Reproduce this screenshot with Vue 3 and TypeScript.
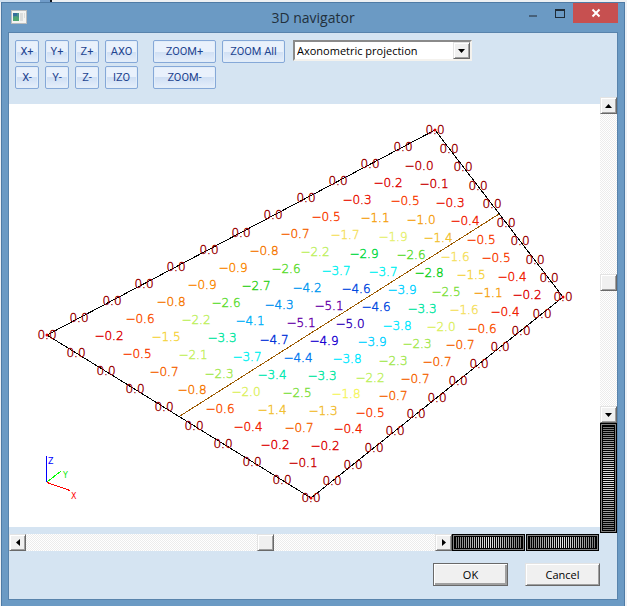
<script setup lang="ts">
import { ref } from 'vue'

interface Point { x: number; y: number }
interface Label extends Point { text: string; color: string }

const projection = ref('Axonometric projection')
const panX = ref(59)
const panY = ref(58)
const spinX = ref(50)
const spinY = ref(50)
const spinZ = ref(50)

// Plate corners on the 591 x 423 drawing
const west: Point = { x: 38, y: 231 }
const north: Point = { x: 426, y: 26 }
const east: Point = { x: 554, y: 193 }
const south: Point = { x: 302, y: 394 }

const values: string[] = [
  '0.2 0.6 0.8 0.9 0.9 0.8 0.7 0.5 0.3 0.2 0.0',
  '0.5 1.5 2.2 2.6 2.7 2.6 2.2 1.7 1.1 0.5 0.1',
  '0.7 2.1 3.3 4.1 4.3 4.2 3.7 2.9 1.9 1.0 0.3',
  '0.8 2.3 3.7 4.7 5.1 5.1 4.6 3.7 2.6 1.4 0.4',
  '0.6 2.0 3.4 4.4 4.9 5.0 4.6 3.9 2.8 1.6 0.5',
  '0.4 1.4 2.5 3.3 3.8 3.9 3.8 3.3 2.5 1.5 0.5',
  '0.2 0.7 1.3 1.8 2.2 2.3 2.3 2.0 1.6 1.1 0.4',
  '0.1 0.2 0.4 0.5 0.7 0.7 0.7 0.7 0.6 0.4 0.2',
]

const palette: Record<string, string> = {
  '0.0': '#b80000', '0.1': '#c80000', '0.2': '#dc0000', '0.3': '#e81000', '0.4': '#f02000',
  '0.5': '#f83c00', '0.6': '#fa5000', '0.7': '#f56400', '0.8': '#f57800', '0.9': '#fa8800',
  '1.0': '#f5a010', '1.1': '#f5a010', '1.3': '#f2bc30', '1.4': '#f2c030', '1.5': '#f5d440',
  '1.6': '#f5e060', '1.7': '#f5e060', '1.8': '#f5f560', '1.9': '#e6f070', '2.0': '#dcf060',
  '2.1': '#c4f060', '2.2': '#bef060', '2.3': '#a4e850', '2.5': '#80e040', '2.6': '#5cdc30',
  '2.7': '#30d020', '2.8': '#10d020', '2.9': '#00d840', '3.3': '#00e6a0', '3.4': '#00e8b0',
  '3.7': '#00f0f0', '3.8': '#00e8ff', '3.9': '#00d0ff', '4.1': '#00b0f8', '4.2': '#0098f0',
  '4.3': '#0090f0', '4.4': '#0078f0', '4.6': '#0048e0', '4.7': '#0030d8', '4.9': '#1800d0',
  '5.0': '#3000b8', '5.1': '#6800a8',
}

function mix(a: Point, b: Point, t: number): Point {
  return { x: a.x + (b.x - a.x) * t, y: a.y + (b.y - a.y) * t }
}

function place(p: Point, text: string, color: string): Label {
  return { x: Math.round(p.x), y: Math.round(p.y) + 4, text, color }
}

function edge(a: Point, b: Point, parts: number): Label[] {
  return Array.from({ length: parts }, (_, i) => place(mix(a, b, i / parts), '0.0', '#990000'))
}

const labels: Label[] = [
  ...edge(west, north, 12),
  ...edge(north, east, 9),
  ...edge(east, south, 12),
  ...edge(south, west, 9),
  ...values.flatMap((line, row) => {
    const first = mix({ x: 100, y: 232 }, { x: 294, y: 359 }, row / 7)
    const last = mix({ x: 410, y: 62 }, { x: 518, y: 191 }, row / 7)
    return line.split(' ').map((v, i) => place(mix(first, last, i / 10), '−' + v, palette[v]))
  }),
]

const outline = [west, north, east, south].map((p) => `${p.x},${p.y}`).join(' ')
</script>

<template>
  <main class="window">
    <header class="titlebar">
      <svg class="app-icon" viewBox="0 0 16 14" aria-hidden="true">
        <rect x="0.5" y="0.5" width="15" height="13" fill="#f4f4f2" stroke="#b9bcbd" />
        <rect x="2" y="3" width="6" height="8" fill="#4a8d8c" />
        <path d="M2 3h4v3H2z" fill="#356f9c" />
        <path d="M2 8l3-2 3 2v3H2z" fill="#4fa572" />
        <path d="M9 3h3v8H9zM13 3h1v5h-1z" fill="#dcdedd" />
      </svg>
      <h1>3D navigator</h1>
      <div class="controls">
        <button type="button" aria-label="Minimize">
          <svg width="10" height="14" viewBox="0 0 10 14"><path d="M1 9h8v2H1z" fill="#47617a" /></svg>
        </button>
        <button type="button" aria-label="Maximize">
          <svg width="12" height="14" viewBox="0 0 12 14"><path d="M1 3h10v9H1zM2 5v6h8V5z" fill="#1f2b36" fill-rule="evenodd" /></svg>
        </button>
        <button type="button" class="close" aria-label="Close">
          <svg width="10" height="10" viewBox="0 0 10 10"><path d="M1.500 1.500l7 7M8.500 1.500l-7 7" stroke="#fff" stroke-width="2" /></svg>
        </button>
      </div>
    </header>

    <section class="content">
      <div class="toolbar">
        <div class="views">
          <button type="button">X+</button>
          <button type="button">Y+</button>
          <button type="button">Z+</button>
          <button type="button">AXO</button>
          <button type="button">X-</button>
          <button type="button">Y-</button>
          <button type="button">Z-</button>
          <button type="button">IZO</button>
        </div>
        <div class="zooms">
          <button type="button">ZOOM+</button>
          <button type="button">ZOOM All</button>
          <button type="button">ZOOM-</button>
        </div>
        <div class="combo">
          <select v-model="projection" aria-label="Projection">
            <option>Axonometric projection</option>
          </select>
          <span class="drop raised" aria-hidden="true">
            <svg width="7" height="4" viewBox="0 0 7 4"><path d="M0 0h7L3.500 4z" /></svg>
          </span>
        </div>
      </div>

      <div class="stage">
        <div class="canvas">
          <svg viewBox="0 0 591 423" role="img" aria-label="Plate results">
            <line x1="171" y1="312" x2="490" y2="110" class="divider" />
            <polygon :points="outline" class="outline" />
            <g class="nodes">
              <circle :cx="west.x" :cy="west.y" r="1.500" />
              <circle :cx="north.x" :cy="north.y" r="1.500" />
              <circle :cx="east.x" :cy="east.y" r="1.500" />
              <circle :cx="south.x" :cy="south.y" r="1.500" />
            </g>
            <g class="labels">
              <text v-for="(l, i) in labels" :key="i" :x="l.x" :y="l.y" :fill="l.color" :stroke="l.color">{{ l.text }}</text>
            </g>
            <g class="axes">
              <path d="M37.500 378V352" stroke="#0000ff" />
              <path d="M38 378l14-11" stroke="#00ff00" />
              <path d="M38 378.500l23 8" stroke="#ff0000" />
              <text x="39" y="360" fill="#0000ff">Z</text>
              <text x="54" y="374" fill="#00e800">Y</text>
              <text x="62" y="395" fill="#ff0000">X</text>
            </g>
          </svg>
        </div>
        <div class="side">
          <button type="button" class="step raised" aria-label="Scroll up">
            <svg width="7" height="4" viewBox="0 0 7 4"><path d="M0 4h7L3.500 0z" /></svg>
          </button>
          <input v-model="panY" class="scroll vertical" type="range" aria-label="Vertical position" />
          <button type="button" class="step raised" aria-label="Scroll down">
            <svg width="7" height="4" viewBox="0 0 7 4"><path d="M0 0h7L3.500 4z" /></svg>
          </button>
          <input v-model="spinY" class="dial upright" type="range" aria-label="Rotate vertically" />
        </div>
      </div>

      <div class="bottom">
        <button type="button" class="step raised" aria-label="Scroll left">
          <svg width="4" height="7" viewBox="0 0 4 7"><path d="M4 0v7L0 3.500z" /></svg>
        </button>
        <input v-model="panX" class="scroll" type="range" aria-label="Horizontal position" />
        <button type="button" class="step raised" aria-label="Scroll right">
          <svg width="4" height="7" viewBox="0 0 4 7"><path d="M0 0v7L4 3.500z" /></svg>
        </button>
        <input v-model="spinX" class="dial" type="range" aria-label="Rotate horizontally" />
        <input v-model="spinZ" class="dial" type="range" aria-label="Roll" />
      </div>

      <footer class="actions">
        <button type="button" class="raised default">OK</button>
        <button type="button" class="raised">Cancel</button>
      </footer>
    </section>
  </main>
</template>

<style>
body {
  margin: 0;
  background: linear-gradient(90deg, #cfe0f0 0 40px, #6f9bc8 40px 50px, #10151c 50px 52px, #eef0f2 52px) 0 0 / 100% 2px no-repeat, #eef1f5;
}
</style>

<style scoped>
.window {
  box-sizing: border-box;
  display: flex;
  flex-direction: column;
  min-height: calc(100vh - 2px);
  margin: 2px 2px 0 1px;
  padding: 0 6px 6px;
  border: 1px solid #4f7ba5;
  border-bottom: 0;
  background: #6b9ac4;
  font-family: "Open Sans", "Noto Sans", sans-serif;
  font-size: 11px;
  color: #000;
}
button, input, select { box-sizing: border-box; margin: 0; padding: 0; font: inherit; color: inherit; }
button svg { display: block; }

.titlebar {
  display: grid;
  grid-template-columns: 1fr auto 1fr;
  height: 29px;
}
.app-icon { width: 16px; height: 14px; margin: 7px 0 0 3px; }
h1 { margin: 0; font-size: 14px; font-weight: 400; line-height: 29px; color: #22303c; }
.controls { display: flex; justify-content: flex-end; align-items: flex-start; }
.controls button {
  display: grid;
  place-items: center;
  width: 27px;
  height: 20px;
  border: 0;
  background: none;
}
.controls .close { width: 45px; background: #c75050; }

.content {
  flex: 1;
  border: 1px solid #5883ac;
  background: #d5e4f2;
}
.toolbar {
  display: flex;
  align-items: flex-start;
  padding: 7px 6px 8px;
}
.views, .zooms { display: grid; gap: 3px 6px; grid-auto-rows: 23px; }
.views { grid-template-columns: 24px 24px 24px 33px; }
.zooms { grid-template-columns: 63px 63px; margin-left: 15px; }
.toolbar button {
  border: 1px solid #85a8d8;
  border-radius: 2px;
  background: linear-gradient(#e9f1fc 0 50%, #cfdff4 50%, #e6effb);
  box-shadow: 0 0 0 1px #e2edf8 inset;
  font-family: Roboto, sans-serif;
  font-size: 11px;
  line-height: 21px;
  color: #1e4490;
}
.combo { position: relative; width: 179px; margin-left: 8px; }
.combo select {
  appearance: none;
  display: block;
  width: 100%;
  height: 21px;
  padding: 0 20px 0 2px;
  border: 2px solid;
  border-color: #8a8a8a #f4f2ee #f4f2ee #8a8a8a;
  border-radius: 0;
  background: #fff;
  line-height: 16px;
}
.drop {
  position: absolute;
  top: 2px;
  right: 2px;
  display: grid;
  place-items: center;
  width: 17px;
  height: 17px;
  pointer-events: none;
}
.raised {
  box-sizing: border-box;
  border: 1px solid;
  border-color: #e3e3e3 #696969 #696969 #e3e3e3;
  border-radius: 0;
  background: #f0f0f0;
  box-shadow: 1px 1px 0 #fff inset, -1px -1px 0 #a0a0a0 inset;
}

.stage { display: grid; grid-template-columns: 1fr 17px; }
.canvas { margin: 7px 0 6px; background: #fff; }
.canvas svg { display: block; width: 100%; height: auto; }
.outline { fill: none; stroke: #000; stroke-width: 1; shape-rendering: crispEdges; }
.divider { stroke: #9c5a00; shape-rendering: crispEdges; }
.nodes { fill: #e00000; }
.labels {
  font-family: "DejaVu Sans", sans-serif;
  font-weight: 200;
  font-size: 12px;
  stroke-width: 0.4;
  text-anchor: middle;
}
.axes { fill: none; font-family: "DejaVu Sans", sans-serif; font-size: 8px; }
.axes path { shape-rendering: crispEdges; }

.side { display: flex; flex-direction: column; min-height: 0; }
.step { display: grid; place-items: center; flex: none; width: 17px; height: 17px; }
.scroll {
  appearance: none;
  flex: 1;
  min-width: 0;
  min-height: 0;
  height: 17px;
  background: repeating-conic-gradient(#fff 0 25%, #ececec 0 50%) 0 0 / 2px 2px;
}
.scroll.vertical { width: 17px; height: 0; writing-mode: vertical-lr; }
.scroll::-webkit-slider-thumb {
  appearance: none;
  box-sizing: border-box;
  width: 17px;
  height: 17px;
  border: 1px solid;
  border-color: #e3e3e3 #696969 #696969 #e3e3e3;
  background: #f0f0f0;
  box-shadow: 1px 1px 0 #fff inset, -1px -1px 0 #a0a0a0 inset;
}
.dial {
  appearance: none;
  flex: none;
  width: 73px;
  height: 17px;
  border: 1px solid #000;
  outline: 0;
  background:
    repeating-linear-gradient(90deg, #000 0 1px, transparent 1px 2px),
    linear-gradient(90deg, #707070, #e8e8e8 50%, #707070);
  box-shadow: 0 0 0 1px #808080 inset, 0 0 0 2px #000 inset;
}
.dial.upright {
  width: 17px;
  height: 110px;
  writing-mode: vertical-lr;
  background:
    repeating-linear-gradient(#000 0 1px, transparent 1px 2px),
    linear-gradient(#707070, #e8e8e8 50%, #707070);
}
.dial::-webkit-slider-thumb { appearance: none; width: 8px; height: 8px; opacity: 0; }

.bottom { display: flex; padding: 1px 18px 0 0; }
.bottom .dial + .dial { margin-left: 1px; }

.actions { display: flex; justify-content: flex-end; gap: 17px; padding: 12px 17px; }
.actions button { width: 75px; height: 23px; line-height: 19px; }
.actions .default { outline: 1px solid #696969; outline-offset: -1px; border-color: #696969; box-shadow: 1px 1px 0 #fff inset, -2px -2px 0 #a0a0a0 inset; }
</style>
